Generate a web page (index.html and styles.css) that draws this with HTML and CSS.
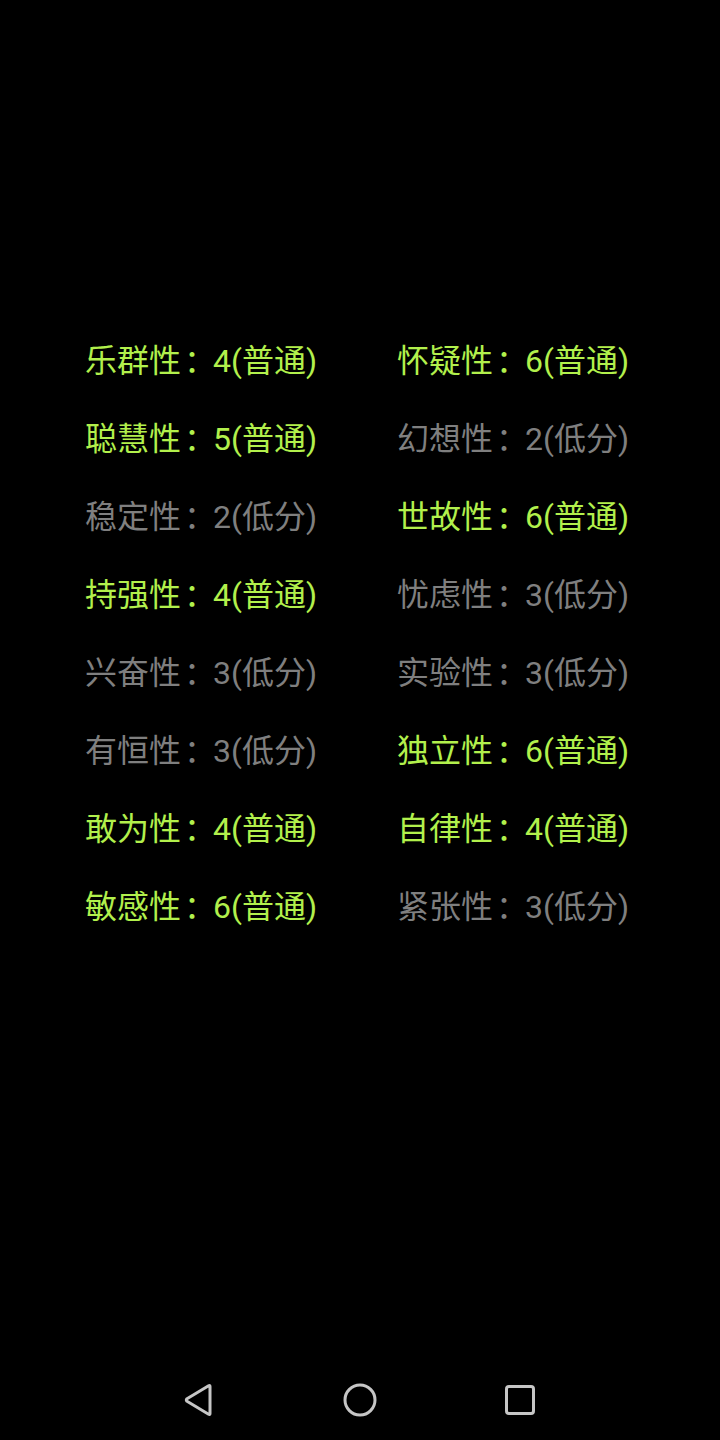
FILE: index.html
```html
<!DOCTYPE html>
<html lang="zh-CN">
<head>
<meta charset="utf-8">
<link rel="stylesheet" href="styles.css">
</head>
<body>
<div class="screen">
  <main class="grid">
    <div class="item hi">乐群性<span class="colon">：</span>4(普通)</div>
    <div class="item hi">怀疑性<span class="colon">：</span>6(普通)</div>
    <div class="item hi">聪慧性<span class="colon">：</span>5(普通)</div>
    <div class="item lo">幻想性<span class="colon">：</span>2(低分)</div>
    <div class="item lo">稳定性<span class="colon">：</span>2(低分)</div>
    <div class="item hi">世故性<span class="colon">：</span>6(普通)</div>
    <div class="item hi">持强性<span class="colon">：</span>4(普通)</div>
    <div class="item lo">忧虑性<span class="colon">：</span>3(低分)</div>
    <div class="item lo">兴奋性<span class="colon">：</span>3(低分)</div>
    <div class="item lo">实验性<span class="colon">：</span>3(低分)</div>
    <div class="item lo">有恒性<span class="colon">：</span>3(低分)</div>
    <div class="item hi">独立性<span class="colon">：</span>6(普通)</div>
    <div class="item hi">敢为性<span class="colon">：</span>4(普通)</div>
    <div class="item hi">自律性<span class="colon">：</span>4(普通)</div>
    <div class="item hi">敏感性<span class="colon">：</span>6(普通)</div>
    <div class="item lo">紧张性<span class="colon">：</span>3(低分)</div>
  </main>
  <nav class="navbar">
    <svg class="nav-icon" width="36" height="36" viewBox="0 0 36 36"><path d="M28 4.5 L28 31.5 Q28 33 26.6 32.2 L5 19.3 Q3.6 18 5 16.7 L26.6 3.8 Q28 3 28 4.5 Z" fill="none" stroke="#c6c6c6" stroke-width="3" stroke-linejoin="round"/></svg>
    <svg class="nav-icon" width="36" height="36" viewBox="0 0 36 36"><circle cx="18" cy="18" r="15" fill="none" stroke="#c6c6c6" stroke-width="3"/></svg>
    <svg class="nav-icon" width="36" height="36" viewBox="0 0 36 36"><rect x="4.5" y="4.5" width="27" height="27" rx="2.5" fill="none" stroke="#c6c6c6" stroke-width="3"/></svg>
  </nav>
</div>
</body>
</html>
```
FILE: styles.css
```css
html, body {
  margin: 0;
  padding: 0;
  background: #000;
}
.screen {
  width: 720px;
  height: 1440px;
  display: flex;
  flex-direction: column;
}
.grid {
  flex: 1;
  display: grid;
  grid-template-columns: 312px 312px;
  grid-auto-rows: 78px;
  align-content: start;
  padding: 322px 0 0 86px;
}
.item {
  font-family: Roboto, "Noto Sans CJK SC", sans-serif;
  font-size: 32px;
  line-height: 78px;
  white-space: nowrap;
  margin-left: -1px;
}
.colon {
  padding-left: 3px;
  letter-spacing: -3px;
}
.hi { color: #b2f04c; }
.lo { color: #7f7f7f; }
.navbar {
  height: 80px;
  display: flex;
  align-items: center;
  justify-content: center;
  gap: 124px;
}
.nav-icon { display: block; }
```
